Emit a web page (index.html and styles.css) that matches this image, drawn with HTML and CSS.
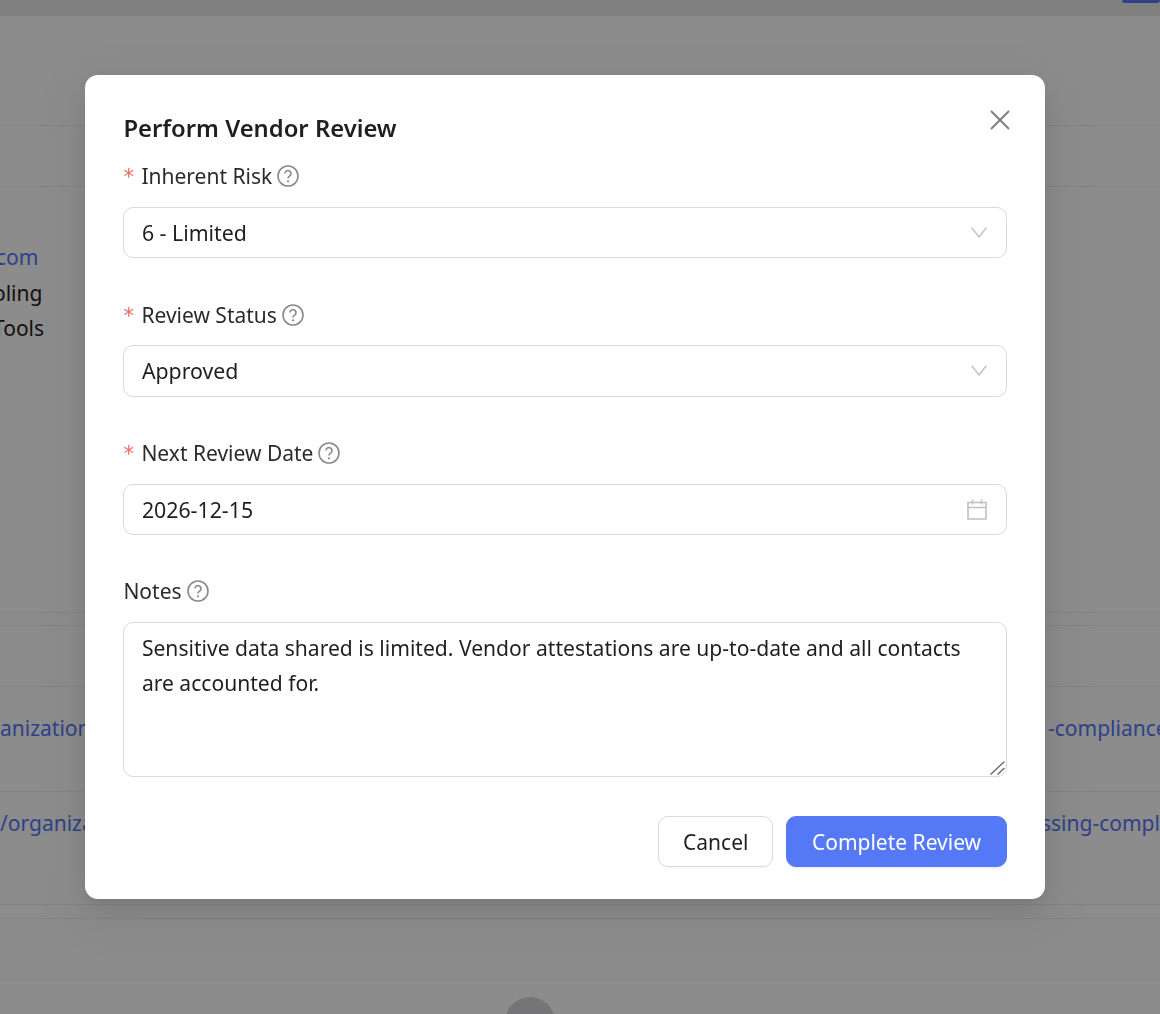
FILE: index.html
```html
<!DOCTYPE html>
<html lang="en">
<head>
<meta charset="utf-8">
<title>Perform Vendor Review</title>
<link rel="stylesheet" href="styles.css">
</head>
<body>
<div class="page">
  <div class="topbar"><span class="topbar-btn"></span></div>
  <div class="row h110"></div>
  <div class="row h61"></div>
  <div class="row details">
    <a class="link domain">com</a>
    <div>oling</div>
    <div>Tools</div>
  </div>
  <div class="row h13"></div>
  <div class="row h61"></div>
  <div class="row url-row h105">
    <a class="link">anization</a>
    <a class="link right">-compliance</a>
  </div>
  <div class="row url-row h113">
    <a class="link">/organiza</a>
    <a class="link right alt">ssing-compliance</a>
  </div>
  <div class="row h14"></div>
  <div class="row h61"></div>
  <div class="foot"><span class="avatar"></span></div>
</div>
<div class="mask"></div>
<div class="modal">
  <svg class="close" viewBox="0 0 20 20" aria-hidden="true"><path d="M1 1 19 19M19 1 1 19"/></svg>
  <h2 class="title">Perform Vendor Review</h2>
  <div class="item">
    <div class="label"><span class="req">*</span>Inherent Risk<svg class="help" viewBox="0 0 22 22"><circle cx="11" cy="11" r="10"/><path d="M8 8.6a3 3 0 1 1 4.6 2.5c-1 .6-1.6 1.2-1.6 2.4"/><circle class="dot" cx="11" cy="16.3" r="1.1"/></svg></div>
    <div class="control">6 - Limited<svg class="chev" viewBox="0 0 16 11"><path d="M.7 .8 8 10 15.3 .8"/></svg></div>
  </div>
  <div class="item">
    <div class="label"><span class="req">*</span>Review Status<svg class="help" viewBox="0 0 22 22"><circle cx="11" cy="11" r="10"/><path d="M8 8.6a3 3 0 1 1 4.6 2.5c-1 .6-1.6 1.2-1.6 2.4"/><circle class="dot" cx="11" cy="16.3" r="1.1"/></svg></div>
    <div class="control">Approved<svg class="chev" viewBox="0 0 16 11"><path d="M.7 .8 8 10 15.3 .8"/></svg></div>
  </div>
  <div class="item">
    <div class="label"><span class="req">*</span>Next Review Date<svg class="help" viewBox="0 0 22 22"><circle cx="11" cy="11" r="10"/><path d="M8 8.6a3 3 0 1 1 4.6 2.5c-1 .6-1.6 1.2-1.6 2.4"/><circle class="dot" cx="11" cy="16.3" r="1.1"/></svg></div>
    <div class="control">2026-12-15<svg class="cal" viewBox="0 0 20 21"><path d="M1 3.5h18v16.5H1zM1 8.5h18M5.5 .5v5M14.5 .5v5"/></svg></div>
  </div>
  <div class="item">
    <div class="label">Notes<svg class="help" viewBox="0 0 22 22"><circle cx="11" cy="11" r="10"/><path d="M8 8.6a3 3 0 1 1 4.6 2.5c-1 .6-1.6 1.2-1.6 2.4"/><circle class="dot" cx="11" cy="16.3" r="1.1"/></svg></div>
    <div class="notes-wrap">
      <textarea class="notes">Sensitive data shared is limited. Vendor attestations are up-to-date and all contacts are accounted for.</textarea>
      <svg class="grip" viewBox="0 0 15 14" aria-hidden="true"><path d="M.5 13.5 14.5 .5M7.5 13.5 14.5 7"/></svg>
    </div>
  </div>
  <div class="actions">
    <button class="btn">Cancel</button>
    <button class="btn primary">Complete Review</button>
  </div>
</div>
</body>
</html>
```
FILE: styles.css
```css
* { box-sizing: border-box; }
html, body { margin: 0; height: 100%; overflow: hidden; }
body { background: #fff; font-family: "Noto Sans", "Open Sans", sans-serif; font-size: 21px; color: #1f1f1f; }

.page { height: 1014px; overflow: hidden; white-space: nowrap; }
.topbar { height: 16px; background: #e9e9e9; display: flex; justify-content: flex-end; }
.topbar-btn { width: 38px; height: 3px; background: #5478f6; border-radius: 0 0 6px 6px; }
.row { border-bottom: 1px solid #eee; position: relative; }
.h110 { height: 110px; }
.h61 { height: 61px; }
.h13 { height: 13px; }
.h14 { height: 14px; }
.h105 { height: 105px; padding-top: 23px; }
.h113 { height: 113px; padding-top: 13px; }
.details { height: 426px; padding-top: 53px; line-height: 35.5px; margin-left: -7px; }
.link { color: #5478f6; }
.domain { margin-left: 3px; }
.url-row { line-height: 36px; }
.right { position: absolute; left: 1048px; }
.right.alt { left: 1041px; }
.foot { display: flex; justify-content: center; padding: 17px 100px 0 0; }
.avatar { width: 50px; height: 50px; border-radius: 50%; background: #d5d5da; }

.mask { position: fixed; inset: 0; background: rgba(0,0,0,.45); }
.modal {
  position: absolute; left: 85px; top: 75px; width: 960px; height: 824px;
  padding: 32px 38.4px; background: #fff; border-radius: 13px;
  box-shadow: 0 10px 26px rgba(0,0,0,.08), 0 5px 10px -6px rgba(0,0,0,.12), 0 14px 45px 13px rgba(0,0,0,.05);
}
.close { position: absolute; left: 905px; top: 35px; width: 20px; height: 20px; fill: none; stroke: #808080; stroke-width: 2.1; }
.title { margin: 0; height: 51.2px; line-height: 42px; font-size: 23.8px; font-weight: 600; color: #1f1f1f; }
.item { margin-bottom: 38.4px; }
.label { height: 48.8px; line-height: 37px; display: flex; align-items: flex-start; color: #2b2b2b; }
.req { color: #e8685f; width: 18px; margin-top: 1px; font-family: "DejaVu Sans", sans-serif; font-size: 21px; }
.help { width: 22px; height: 22px; margin: 7px 0 0 5px; fill: none; stroke: #8a8a8a; stroke-width: 1.6; }
.help .dot { fill: #8a8a8a; stroke: none; }
.control {
  height: 51.2px; border: 1px solid #d9d9d9; border-radius: 10px; padding: 0 18px 0 17.5px;
  display: flex; align-items: center; justify-content: space-between; color: #1f1f1f; background: #fff;
  font-size: 21.3px;
}
.chev { width: 16px; height: 11px; margin-right: 1px; fill: none; stroke: #c4c4c4; stroke-width: 1.5; }
.cal { width: 20px; height: 21px; margin-right: 1px; fill: none; stroke: #c0c0c0; stroke-width: 1.6; }
.notes-wrap { position: relative; }
.notes {
  display: block; width: 100%; height: 155px; border: 1px solid #d9d9d9; border-radius: 10px;
  padding: 7px 18px 7px 17.5px; font: inherit; font-size: 21.08px; line-height: 35px; color: #1f1f1f; outline: none; resize: none;
}
.grip { position: absolute; right: 2px; bottom: 2px; width: 15px; height: 14px; fill: none; stroke: #666; stroke-width: 1.3; }
.actions { display: flex; justify-content: flex-end; gap: 13px; }
.btn {
  height: 51.2px; padding: 1px 24px 0; border: 1px solid #d9d9d9; border-radius: 10px; background: #fff;
  font: inherit; color: #1f1f1f; box-shadow: 0 2px 0 rgba(0,0,0,.02);
}
.btn.primary { padding: 1px 24.5px 0; background: #5478f6; border-color: #5478f6; color: #fff; box-shadow: 0 2px 0 rgba(84,120,246,.1); }
```
